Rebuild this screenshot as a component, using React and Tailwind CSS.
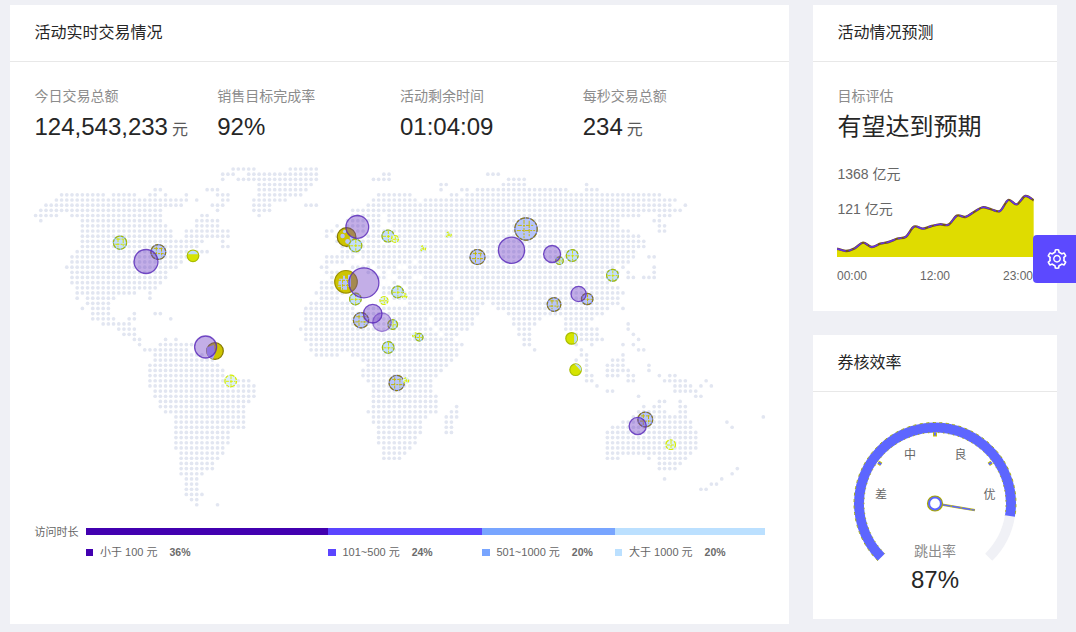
import React from 'react';

// Land cells of the dotted world map: one entry per row, "from-to" column ranges.
const LAND = [
  '38-42 49-54',
  '36-38 41-54 67-68 87-89',
  '36 39-54 65-68 91-94',
  '43-53 78-79 90-94 106',
  '23-24 33-35 43-52 78 82-83 85-102 106-108',
  '5-13 15-19 22-23 25 29 35-37 43-51 66-72 80-81 83-120',
  '4-29 31 36-37 42-48 65-73 75-123',
  '2-28 34-36 42-45 52-54 64-73 74-122 125',
  '1-24 35 42-45 61-124',
  '0-4 7-24 32-33 43 61-66 68-116 120-122',
  '1 9-24 31-35 60-66 68-112 119-120',
  '9-25 31-35 58 60-63 65-66 69-112 120-121',
  '9-26 29-37 56-57 61-63 65-67 69-114 120-121',
  '9-26 29-37 56 58-61 64-67 69-116',
  '9-32 36 58-60 63-66 68-117',
  '9-31 36-37 59-117',
  '8-33 59-115',
  '7-29 56-61 63-115 118-119',
  '7-28 56-59 64-72 74-114',
  '6 7-27 55-56 61-64 66-69 72-111 113 119',
  '7-25 56-58 64-65 67 69-112 114 119',
  '7-25 57-59 66-67 70-72 75-111 114-115 117-119',
  '7-24 55-60 69 71-110',
  '8-23 55-60 67-70 72-112',
  '8-19 22 54-59 67-80 82-113',
  '8 10-15 22 55-58 69-80 82-112',
  '10-14 53-60 72-86 88-112',
  '9 11-14 52-61 64-85 89-110 113',
  '11-14 19 23-24 52-85 91-109',
  '11-15 18-19 26 52-75 77-84 92-97 102-107',
  '13-18 52-75 77-84 92-96 102-106 114',
  '16-19 51-76 78-83 93-95 102-108 114',
  '17-19 52-77 79-81 93-95 103-108 115',
  '19-20 25 27 52-80 94-95 103-109 116',
  '20 24-30 53-79 80-82 94-95 104 107 113 115',
  '21-29 53-78 79-81 96 105 116-117',
  '23-32 54-58 61-81 105-106 113',
  '23-34 63-80 104 106 111-113',
  '22-35 64-79 106 110-113 118',
  '22-36 63-78 106 110-114 118',
  '22-36 63-77 106-107 110-112 114-115 120 122-123',
  '22-36 38-41 64-76 106-107 114-115 121-125 129',
  '22-42 65-76 108 123-126 128 130',
  '23-42 65-76 110-111 123-127',
  '23-42 65-77 116 127-128',
  '24-41 65-77 120-121 124',
  '24-40 65-77 81 117 119-120 124-125',
  '25-40 64-77 80-81 116-121 124-125',
  '27-40 65-75 79-81 115-125 140',
  '27-40 65-74 79-80 113-126 133',
  '27-40 66-74 79-80 111-126 134',
  '27-37 66-74 79-80 110-127',
  '27-37 66-73 110-127',
  '27-37 66-73 110-127',
  '27-36 67-72 110-127',
  '28-36 67-71 110-126',
  '28-35 67-70 110-112 118 120-125',
  '28-34 120-124',
  '28-34 120-123 135',
  '28-32 134',
  '29-31 121 132',
  '29-31 130-131',
  '29-31 128-129',
  '29-32',
  '30-31',
  '31 35',
];

const DOTS = LAND.flatMap((row, r) =>
  row.split(' ').flatMap((span) => {
    const [a, b = a] = span.split('-').map(Number);
    return Array.from({ length: b - a + 1 }, (_, i) => [35.6 + (a + i) * 5.198, 169 + r * 5.165]);
  }),
);

// x, y, radius, kind
const BUBBLES = [
  [346.6, 237, 9.3, 'olive'],
  [346, 281.8, 11.3, 'half'],
  [215, 351, 8.3, 'olive'],
  [158.3, 252, 7.4, 'blue'],
  [477.5, 257, 7.5, 'blue'],
  [526, 229, 11.2, 'blue'],
  [554, 304.5, 6.8, 'blue'],
  [587.2, 299, 5.7, 'blue'],
  [361, 320.3, 7.6, 'blue'],
  [396.7, 383, 7.6, 'blue'],
  [645.3, 419.5, 7.4, 'blue'],
  [120, 242.7, 6.6, 'sky'],
  [355.5, 245.5, 6.3, 'sky'],
  [388, 236, 6, 'sky'],
  [395, 239, 3.5, 'pale'],
  [423, 248.5, 2.6, 'pale'],
  [448.6, 234.8, 2.6, 'pale'],
  [572.2, 255.5, 5.9, 'sky'],
  [559.5, 260.7, 3.8, 'sky'],
  [612.5, 275.3, 5.9, 'sky'],
  [355.4, 299, 5.8, 'sky'],
  [397.6, 292, 5.8, 'sky'],
  [404.5, 296, 2.4, 'pale'],
  [384, 300.5, 4, 'pale'],
  [392.7, 324.5, 4.8, 'sky'],
  [415, 335.3, 2.4, 'pale'],
  [419.2, 337.2, 3.8, 'sky'],
  [388.2, 347.5, 5.8, 'sky'],
  [230.7, 381, 5.8, 'pale'],
  [670.7, 444.7, 4.8, 'pale'],
  [406, 380.5, 2.6, 'pale'],
  [193, 255.8, 5.8, 'lime'],
  [571.6, 338.4, 5.8, 'lime'],
  [575.6, 369.7, 5.8, 'lime'],
  [382, 322.2, 9.3, 'light'],
  [146, 261.5, 12, 'purple'],
  [205.6, 347, 11, 'purple'],
  [357.3, 226.9, 11.4, 'purple'],
  [363.9, 282.8, 15, 'purple'],
  [372.7, 313.7, 9.3, 'purple'],
  [511.5, 250.3, 13.1, 'purple'],
  [552.1, 254, 8.5, 'purple'],
  [578.6, 294, 7.6, 'purple'],
  [637.7, 426, 8.6, 'purple'],
];

const STYLES = {
  olive: { fill: '#cdc400', edge: '#857800' },
  half: { fill: '#cdc400', edge: '#9b9000' },
  blue: { fill: '#b7c5fb', edge: '#7b86ee', mark: '#c3b80c', dash: '#8d7d12' },
  sky: { fill: '#c3defc', edge: '#8bbcf2', mark: '#d6e500', dash: '#a9bd00' },
  pale: { fill: '#dceefb', edge: '#dceefb', mark: '#dcf000', dash: '#d8ee00' },
  lime: { fill: '#d6e400', edge: '#a9bd00' },
};

function Bubble({ x, y, r, kind }) {
  if (kind === 'purple' || kind === 'light') {
    const faint = kind === 'light';
    return (
      <circle
        cx={x}
        cy={y}
        r={r}
        fill="#6a35c4"
        fillOpacity={faint ? 0.34 : 0.4}
        stroke="#5524b8"
        strokeOpacity={faint ? 0.5 : 0.8}
        strokeWidth="1.3"
      />
    );
  }
  const s = STYLES[kind];
  return (
    <g fill="none">
      <circle cx={x} cy={y} r={r} fill={s.fill} stroke={s.edge} strokeWidth="1.2" />
      {s.mark && (
        <>
          <circle cx={x} cy={y} r={r} stroke={s.dash} strokeWidth="1.2" strokeDasharray={r > 3 ? '3 1.5 5 1' : '2 3'} />
          {r > 6.5 ? (
            <path
              d={`M${x - r + 2} ${y + 1.6}h${2 * r - 4}M${x - r + 3} ${y - 3.6}h${2 * r - 6}M${x - 2} ${y - r + 2}v${2 * r - 4}M${x + 3.2} ${y - r + 3}v${2 * r - 6}`}
              stroke={s.mark}
              strokeWidth="1"
              strokeDasharray="4 1.2 2 1"
            />
          ) : (
            <path
              d={`M${x - r + 1} ${y + 0.3}h${2 * r - 2}M${x + 0.3} ${y - r + 1}v${2 * r - 2}`}
              stroke={s.mark}
              strokeWidth="1"
              strokeDasharray="3 1"
            />
          )}
        </>
      )}
      {kind === 'half' && (
        <path
          d={`M${x - 7} ${y - 3}h3v-3h3v3h3v-4h3v12h-4v3h-6v-3h-3z`}
          fill="#b7c5fb"
        />
      )}
      {kind === 'half' && (
        <path d={`M${x - 8} ${y + 3.5}h12M${x - 8} ${y - 1.5}h12M${x - 3.5} ${y - 6}v14M${x + 1.5} ${y - 6}v14`} stroke="#cdc400" strokeDasharray="3 1" />
      )}
      {kind === 'olive' && x > 300 && (
        <g fill="#b7c5fb">
          <circle cx={x - 4} cy={y - 1} r="2.2" />
          <circle cx={x + 1} cy={y + 4.5} r="2.4" />
          <circle cx={x - 2} cy={y - 5.5} r="1.7" />
          <circle cx={x + 5} cy={y + 1} r="2" />
        </g>
      )}
      {kind === 'olive' && x < 300 && <path d={`M${x - 7.6} ${y - 4}A8.3 8.3 0 0 0 ${x - 2} ${y + 8}L${x} ${y + 3}L${x - 1} ${y - 6}z`} fill="#a9a0f5" />}
      {kind === 'lime' && y < 300 && <path d={`M${x - 5} ${y - 1.5}a5.3 5.3 0 0 1 10 0z`} fill="#bbdcf8" />}
      {kind === 'lime' && y > 300 && y < 350 && <path d={`M${x + 2.5} ${y - 5}a5.6 5.6 0 0 1 0 10z`} fill="#bbdcf8" />}
      {kind === 'lime' && y > 350 && <path d={`M${x - 1} ${y - 5.4}l3 3l3.5 4a5.6 5.6 0 0 0-4-7z`} fill="#bbdcf8" />}
    </g>
  );
}

function WorldMap() {
  return (
    <svg className="block h-[355px] w-[779px]" viewBox="10 160 779 355">
      <g fill="#e2e6f1">
        {DOTS.map(([x, y], i) => (
          <circle key={i} cx={x} cy={y} r="1.85" />
        ))}
      </g>
      {BUBBLES.map(([x, y, r, kind], i) => (
        <Bubble key={i} x={x} y={y} r={r} kind={kind} />
      ))}
    </svg>
  );
}

const STATS = [
  ['今日交易总额', '124,543,233', '元'],
  ['销售目标完成率', '92%'],
  ['活动剩余时间', '01:04:09'],
  ['每秒交易总额', '234', '元'],
];

function Segment({ className, bar, label, percent }) {
  return (
    <div className={className}>
      <div className={`h-[7.5px] ${bar}`} />
      <div className="mt-[9px] flex h-4 items-center whitespace-nowrap text-[11px] leading-4 text-[#666]">
        <span className={`mr-[7px] h-[7px] w-[7.5px] ${bar}`} />
        <span>{label}</span>
        <span className="ml-[12px] font-bold text-[10.5px] text-[#6b6b6b]">{percent}</span>
      </div>
    </div>
  );
}

function Card({ className, title, children }) {
  return (
    <section className={`bg-white ${className}`}>
      <h2 className="h-[57px] border-b border-[#e8e8e8] pl-[24.5px] text-base leading-[55px] text-[#262626]">{title}</h2>
      {children}
    </section>
  );
}

const TREND = [
  [51, 266], [78, 273], [104, 265], [129, 248], [155, 261], [181, 251], [206, 246], [232, 236],
  [258, 230], [282, 200], [309, 206], [335, 198], [360, 193], [386, 194], [411, 167], [436, 171],
  [462, 156], [488, 142], [514, 148], [540, 153], [565, 120], [590, 133], [616, 108], [641, 121],
].map(([x, y]) => [(x - 51) / 3, y / 3 - 30]);

const trendPath = TREND.slice(1).reduce((d, p, i) => {
  const p1 = TREND[i];
  const p0 = TREND[i - 1] || p1;
  const p3 = TREND[i + 2] || p;
  return `${d}C${p1[0] + (p[0] - p0[0]) / 6} ${p1[1] + (p[1] - p0[1]) / 6} ${p[0] - (p3[0] - p1[0]) / 6} ${p[1] - (p3[1] - p1[1]) / 6} ${p[0]} ${p[1]}`;
}, `M${TREND[0][0]} ${TREND[0][1]}`);

function Trend() {
  return (
    <svg className="block h-[67px] w-[197px]" viewBox="0 0 197 67">
      <path d={`${trendPath}V67H0z`} fill="#dfdc00" />
      <path d={trendPath} fill="none" stroke="#74551c" strokeWidth="2.4" />
      <path d={trendPath} fill="none" stroke="#6333e6" strokeWidth="1.5" strokeDasharray="9 3 4 2" />
    </svg>
  );
}

function polar(r, deg) {
  const a = (deg * Math.PI) / 180;
  return `${95 + r * Math.cos(a)} ${93.5 + r * Math.sin(a)}`;
}

function Gauge() {
  return (
    <svg className="block h-[210px] w-[190px]" viewBox="0 0 190 210" fontFamily='"Liberation Sans", "Noto Sans CJK SC", sans-serif' textAnchor="middle">
      <g fill="none">
        <path d={`M${polar(76, 9)}A76 76 0 0 1 ${polar(76, 45)}`} stroke="#f0f1f6" strokeWidth="10" />
        <path d={`M${polar(76, 135)}A76 76 0 1 1 ${polar(76, 9.5)}`} stroke="#5d66ff" strokeWidth="10" />
        <path d={`M${polar(81, 135)}A81 81 0 1 1 ${polar(81, 9.5)}`} stroke="#a6ae14" strokeWidth="1" strokeDasharray="3 3.5" />
        <path d={`M${polar(71, 135)}A71 71 0 1 1 ${polar(71, 9.5)}`} stroke="#a6ae14" strokeWidth="1" strokeDasharray="1.5 3.5" />
        <path d={`M${polar(70, 216)}L${polar(66.5, 216)}M${polar(71, 270)}L${polar(67, 270)}M${polar(70, 324)}L${polar(66.5, 324)}`} stroke="#c9c400" strokeWidth="4" />
        <path d={`M${polar(70, 216)}L${polar(66.5, 216)}M${polar(71, 270)}L${polar(68, 270)}M${polar(70, 324)}L${polar(66.5, 324)}`} stroke="#5d66ff" strokeWidth="2" />
        <path d={`M${polar(7, 9.5)}L${polar(40.5, 9.5)}`} stroke="#bdb90a" strokeWidth="2.4" />
        <path d={`M${polar(7, 9.5)}L${polar(40, 9.5)}`} stroke="#5d66ff" strokeWidth="1.4" strokeDasharray="9 1" />
        <circle cx="95" cy="93.5" r="6.7" stroke="#aaa900" strokeWidth="2.8" />
        <circle cx="95" cy="93.5" r="5.9" fill="#fff" stroke="#5d66ff" strokeWidth="2" />
      </g>
      <g fill="#666" fontSize="12">
        <text x="41" y="88.5">差</text>
        <text x="70" y="48.5">中</text>
        <text x="120.5" y="48.5">良</text>
        <text x="149.5" y="88.5">优</text>
      </g>
      <text x="95" y="146" fontSize="14" fill="#8c8c8c">跳出率</text>
      <text x="95" y="178" fontSize="24" fill="#262626">87%</text>
    </svg>
  );
}

function GearIcon() {
  return (
    <svg className="h-5 w-5" viewBox="64 64 896 896" fill="currentColor">
      <path d="M924.8 625.7l-65.5-56c3.1-19 4.7-38.4 4.7-57.8s-1.6-38.8-4.7-57.8l65.5-56a32.03 32.03 0 0 0 9.3-35.2l-.9-2.6a443.74 443.74 0 0 0-79.7-137.9l-1.8-2.1a32.12 32.12 0 0 0-35.1-9.5l-81.3 28.9c-30-24.6-63.5-44-99.7-57.6l-15.7-85a32.05 32.05 0 0 0-25.8-25.7l-2.7-.5c-52.1-9.4-106.9-9.4-159 0l-2.7.5a32.05 32.05 0 0 0-25.8 25.7l-15.8 85.4a351.86 351.86 0 0 0-99 57.4l-81.9-29.1a32 32 0 0 0-35.1 9.5l-1.8 2.1a446.02 446.02 0 0 0-79.7 137.9l-.9 2.6c-4.5 12.5-.8 26.5 9.3 35.2l66.3 56.6c-3.1 18.8-4.6 38-4.6 57.1 0 19.2 1.5 38.4 4.6 57.1L99 625.5a32.03 32.03 0 0 0-9.3 35.2l.9 2.6c18.1 50.4 44.9 96.9 79.7 137.9l1.8 2.1a32.12 32.12 0 0 0 35.1 9.5l81.9-29.1c29.8 24.5 63.1 43.9 99 57.4l15.8 85.4a32.05 32.05 0 0 0 25.8 25.7l2.7.5a449.4 449.4 0 0 0 159 0l2.7-.5a32.05 32.05 0 0 0 25.8-25.7l15.7-85a350 350 0 0 0 99.7-57.6l81.3 28.9a32 32 0 0 0 35.1-9.5l1.8-2.1c34.8-41.1 61.6-87.5 79.7-137.9l.9-2.6c4.5-12.3.8-26.3-9.3-35zM788.3 465.9c2.5 15.1 3.8 30.6 3.8 46.1s-1.3 31-3.8 46.1l-6.6 40.1 74.7 63.9a370.03 370.03 0 0 1-42.6 73.6L721 702.8l-31.4 25.8c-23.9 19.6-50.5 35-79.3 45.8l-38.1 14.3-17.9 97a377.5 377.5 0 0 1-85 0l-17.9-97.2-37.8-14.5c-28.5-10.8-55-26.2-78.7-45.7l-31.4-25.9-93.4 33.2c-17-22.9-31.2-47.6-42.6-73.6l75.5-64.5-6.5-40c-2.4-14.9-3.7-30.3-3.7-45.5 0-15.3 1.2-30.6 3.7-45.5l6.5-40-75.5-64.5c11.3-26.1 25.6-50.7 42.6-73.6l93.4 33.2 31.4-25.9c23.7-19.5 50.2-34.9 78.7-45.7l37.9-14.3 17.9-97.2c28.1-3.2 56.8-3.2 85 0l17.9 97 38.1 14.3c28.7 10.8 55.4 26.2 79.3 45.8l31.4 25.8 92.8-32.9c17 22.9 31.2 47.6 42.6 73.6L781.8 426l6.5 39.9zM512 326c-97.2 0-176 78.8-176 176s78.8 176 176 176 176-78.8 176-176-78.8-176-176-176zm79.2 255.2A111.6 111.6 0 0 1 512 614c-29.9 0-58-11.7-79.2-32.8A111.6 111.6 0 0 1 400 502c0-29.9 11.7-58 32.8-79.2C454 401.6 482.1 390 512 390c29.9 0 58 11.6 79.2 32.8A111.6 111.6 0 0 1 624 502c0 29.9-11.7 58-32.8 79.2z" />
    </svg>
  );
}

export default function App() {
  return (
    <main className='relative flex h-[632px] w-[1076px] gap-6 overflow-hidden bg-[#eff0f5] pl-[10px] pt-[5px] font-["Liberation_Sans","Noto_Sans_CJK_SC",sans-serif]'>
      <Card className="h-[619px] w-[779px]" title="活动实时交易情况">
        <div className="grid h-[98px] grid-cols-4 pl-6 pr-6 pt-[23px]">
          {STATS.map(([label, value, unit]) => (
            <div key={label} className="whitespace-nowrap pl-[0.5px]">
              <div className="text-sm leading-[22px] text-[#8c8c8c]">{label}</div>
              <div className="mt-1 text-2xl leading-8 text-[#262626]">
                {value}
                {unit && <span className="ml-1 text-base leading-8 text-[#595959]">{unit}</span>}
              </div>
            </div>
          ))}
        </div>
        <WorldMap />
        <div className="flex pl-[24.5px] pt-[12.5px]">
          <div className="-mt-[5px] w-[51px] text-[11px] leading-[18px] text-[#666]">访问时长</div>
          <Segment className="w-[242.5px]" bar="bg-[#4200b0]" label="小于 100 元" percent="36%" />
          <Segment className="w-[154px]" bar="bg-[#5b45ff]" label="101~500 元" percent="24%" />
          <Segment className="w-[132.5px]" bar="bg-[#78a5ff]" label="501~1000 元" percent="20%" />
          <Segment className="w-[150.5px]" bar="bg-[#bbe0ff]" label="大于 1000 元" percent="20%" />
        </div>
      </Card>

      <div className="flex w-[244px] flex-col gap-6">
        <Card className="h-[306px]" title="活动情况预测">
          <div className="pl-6 pt-[23px]">
            <div className="pl-[0.5px] text-sm leading-[22px] text-[#8c8c8c]">目标评估</div>
            <div className="mt-1 pl-[0.5px] text-2xl leading-8 text-[#262626]">有望达到预期</div>
            <div className="relative mt-[47px]">
              <Trend />
              <div className="absolute -top-[27px] left-[0.5px] text-sm leading-[22px] text-[#666]">
                <div>1368 亿元</div>
                <div className="mt-[13px]">121 亿元</div>
              </div>
            </div>
            <div className="mt-[10px] flex w-[196px] justify-between text-xs leading-[18px] text-[#666]">
              <span>00:00</span>
              <span>12:00</span>
              <span>23:00</span>
            </div>
          </div>
        </Card>
        <Card className="h-[284px]" title="券核效率">
          <div className="flex justify-center pt-[18px]">
            <Gauge />
          </div>
        </Card>
      </div>

      <button aria-label="设置" className="absolute right-0 top-[235px] flex h-12 w-[43px] items-center justify-center rounded-l bg-[#5c49ff] pl-1 text-white">
        <GearIcon />
      </button>
    </main>
  );
}
